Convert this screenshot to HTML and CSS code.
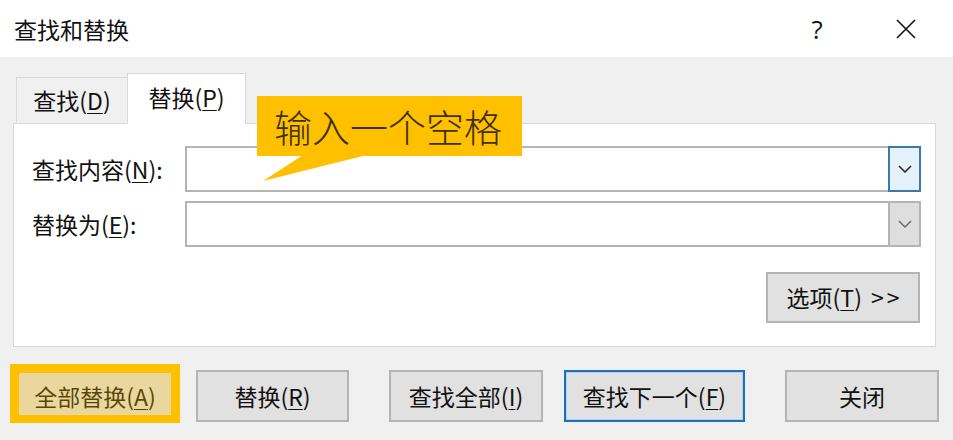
FILE: index.html
```html
<!DOCTYPE html>
<html lang="zh-CN">
<head>
<meta charset="utf-8">
<title>查找和替换</title>
<link rel="stylesheet" href="styles.css">
</head>
<body>
<div class="dialog">
  <div class="titlebar">
    <span class="title">查找和替换</span>
    <span class="help">?</span>
    <span class="close">
      <svg width="20" height="20" viewBox="0 0 20 20"><path d="M1 1 L19 19 M19 1 L1 19" stroke="#111" stroke-width="1.6" fill="none"/></svg>
    </span>
  </div>

  <div class="tabs">
    <div class="tab">查找(<u>D</u>)</div>
    <div class="tab active">替换(<u>P</u>)</div>
  </div>

  <div class="panel">
    <div class="row">
      <span class="label">查找内容(<u>N</u>):</span>
      <div class="combo">
        <div class="field"></div>
        <div class="dd dd-focus">
          <svg width="14" height="8" viewBox="0 0 14 8"><path d="M1 1 L7 7 L13 1" stroke="#2a2a2a" stroke-width="1.6" fill="none"/></svg>
        </div>
      </div>
    </div>
    <div class="row row2">
      <span class="label">替换为(<u>E</u>):</span>
      <div class="combo">
        <div class="field"></div>
        <div class="dd">
          <svg width="14" height="8" viewBox="0 0 14 8"><path d="M1 1 L7 7 L13 1" stroke="#666" stroke-width="1.4" fill="none"/></svg>
        </div>
      </div>
    </div>
    <div class="opts-row">
      <button class="btn btn-opts">选项(<u>T</u>)<span class="arrows">&gt;&gt;</span></button>
    </div>
  </div>

  <div class="actions">
    <button class="btn b1">全部替换(<u>A</u>)<span class="hl"></span></button>
    <button class="btn b2">替换(<u>R</u>)</button>
    <button class="btn b3">查找全部(<u>I</u>)</button>
    <button class="btn b4">查找下一个(<u>F</u>)</button>
    <button class="btn b5">关闭</button>
  </div>

  <div class="callout">输入一个空格</div>
</div>
</body>
</html>
```
FILE: styles.css
```css
* { box-sizing: border-box; }

html, body {
  margin: 0;
  padding: 0;
}

body {
  width: 953px;
  height: 440px;
  overflow: hidden;
  background: #f0f0f0;
  font-family: "Noto Sans CJK SC", "Noto Sans", sans-serif;
  font-size: 23px;
  color: #111;
}

.dialog {
  position: relative;
  width: 953px;
  height: 440px;
}

u { text-decoration: underline; text-underline-offset: 3px; text-decoration-thickness: 1px; }

/* title bar */
.titlebar {
  height: 57px;
  background: #fff;
  display: flex;
  align-items: center;
  padding-left: 14px;
}
.title {
  flex: 1;
  line-height: 1;
  padding-top: 2px;
}
.help {
  width: 40px;
  text-align: center;
  font-family: "Open Sans", "Noto Sans", sans-serif;
  font-weight: 400;
  font-size: 26px;
  line-height: 1;
  color: #111;
}
.close {
  width: 46px;
  margin-left: 46px;
  margin-right: 24px;
  display: flex;
  justify-content: center;
  align-items: center;
  padding-top: 1px;
}

/* tabs */
.tabs {
  display: flex;
  align-items: flex-end;
  height: 50px;
  margin-top: 17px;
  padding-left: 16px;
  position: relative;
  z-index: 1;
  margin-bottom: -1px;
}
.tab {
  width: 111px;
  height: 47px;
  border: 1px solid #d9d9d9;
  border-right: none;
  border-bottom: none;
  display: flex;
  align-items: center;
  justify-content: center;
  line-height: 1;
  padding-bottom: 2px;
}
.tab.active {
  width: 119px;
  height: 51px;
  background: #fff;
  border-right: 1px solid #d9d9d9;
  padding-bottom: 4px;
}

/* panel */
.panel {
  margin-left: 13px;
  width: 923px;
  height: 224px;
  background: #fff;
  border: 1px solid #d9d9d9;
  padding: 22px 14px 0 18px;
}
.row {
  display: flex;
  align-items: center;
  height: 46px;
}
.row2 { margin-top: 9px; }
.label {
  width: 153px;
  line-height: 1;
  padding-top: 1px;
}
.combo {
  flex: 1;
  height: 46px;
  display: flex;
}
.field {
  flex: 1;
  border: 2px solid #b4b4b4;
  border-right: none;
  background: #fff;
}
.dd {
  width: 33px;
  background: #dedede;
  border: 2px solid #b4b4b4;
  display: flex;
  align-items: center;
  justify-content: center;
}
.dd-focus {
  background: #e5f1fb;
  border-color: #3c78aa;
}

.opts-row {
  display: flex;
  justify-content: flex-end;
  margin-top: 25px;
  padding-right: 1px;
}

/* buttons */
.btn {
  font: inherit;
  color: #111;
  height: 52px;
  background: #e1e1e1;
  border: 2px solid #b4b4b4;
  padding: 0;
  line-height: 1;
  display: flex;
  align-items: center;
  justify-content: center;
  position: relative;
}
.btn-opts {
  width: 154px;
  height: 51px;
}
.arrows {
  margin-left: 9px;
  letter-spacing: 3px;
  margin-right: -3px;
}

.actions {
  display: flex;
  margin-top: 23px;
  height: 52px;
}
.b1 { margin-left: 19px; width: 152px; border-color: #e1e1e1; }
.b2 { margin-left: 25px; width: 153px; }
.b3 { margin-left: 40px; width: 154px; }
.b4 {
  margin-left: 21px;
  width: 181px;
  border-color: #1f6fb8;
  box-shadow: inset 0 0 0 1px #a8d4f5;
}
.b5 { margin-left: 40px; width: 154px; }

.hl {
  position: absolute;
  left: -11px;
  right: -11px;
  top: -8px;
  bottom: -3px;
  border: 9px solid #ffc000;
  border-bottom-width: 8px;
  background: rgba(255, 192, 0, 0.3);
}

/* annotation callout */
.callout {
  position: absolute;
  left: 257px;
  top: 96px;
  width: 265px;
  height: 60px;
  background: #ffc000;
  color: #3f2f00;
  font-size: 38px;
  font-weight: 300;
  line-height: 60px;
  padding-left: 17px;
  z-index: 5;
}
.callout::after {
  content: "";
  position: absolute;
  left: 6px;
  top: 59px;
  width: 104px;
  height: 26px;
  background: #ffc000;
  clip-path: polygon(40px 0, 104px 0, 0 100%);
}
```
